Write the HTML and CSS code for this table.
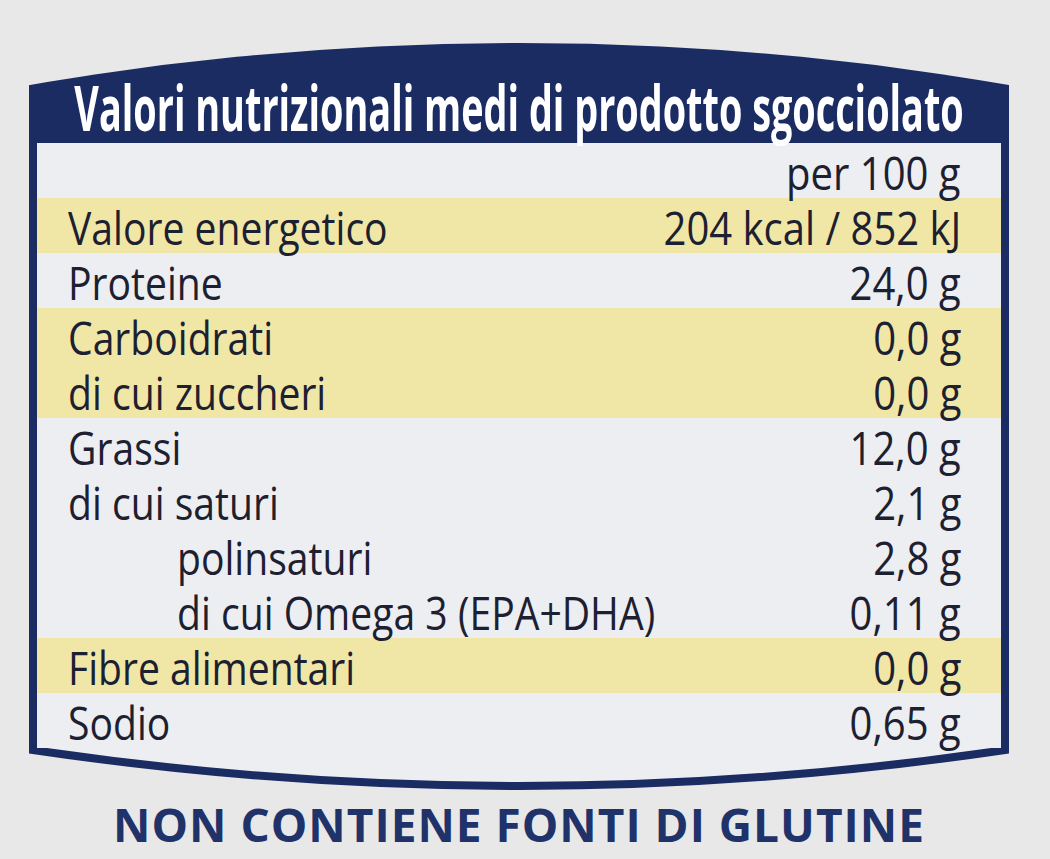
FILE: index.html
```html
<!DOCTYPE html>
<html lang="it">
<head>
<meta charset="utf-8">
<title>Valori nutrizionali</title>
<link rel="stylesheet" href="styles.css">
</head>
<body>
<main class="page">
  <section class="label">
    <header class="label-head">
      <h1 class="title"><span class="title-text">Valori nutrizionali medi di prodotto sgocciolato</span></h1>
    </header>
    <div class="label-body">
      <div class="row"><span class="lab"></span><span class="val"><span class="sq-r">per 100 g</span></span></div>
      <div class="row hl first"><span class="lab"><span class="sq-l">Valore energetico</span></span><span class="val"><span class="sq-r">204 kcal / 852 kJ</span></span></div>
      <div class="row"><span class="lab"><span class="sq-l">Proteine</span></span><span class="val"><span class="sq-r">24,0 g</span></span></div>
      <div class="row hl"><span class="lab"><span class="sq-l">Carboidrati</span></span><span class="val"><span class="sq-r">0,0 g</span></span></div>
      <div class="row hl"><span class="lab"><span class="sq-l">di cui zuccheri</span></span><span class="val"><span class="sq-r">0,0 g</span></span></div>
      <div class="row"><span class="lab"><span class="sq-l">Grassi</span></span><span class="val"><span class="sq-r">12,0 g</span></span></div>
      <div class="row"><span class="lab"><span class="sq-l">di cui saturi</span></span><span class="val"><span class="sq-r">2,1 g</span></span></div>
      <div class="row indent"><span class="lab"><span class="sq-l">polinsaturi</span></span><span class="val"><span class="sq-r">2,8 g</span></span></div>
      <div class="row indent"><span class="lab"><span class="sq-l">di cui Omega 3 (EPA+DHA)</span></span><span class="val"><span class="sq-r">0,11 g</span></span></div>
      <div class="row hl"><span class="lab"><span class="sq-l">Fibre alimentari</span></span><span class="val"><span class="sq-r">0,0 g</span></span></div>
      <div class="row"><span class="lab"><span class="sq-l">Sodio</span></span><span class="val"><span class="sq-r">0,65 g</span></span></div>
    </div>
    <svg class="label-foot" width="980" height="48" viewBox="0 0 980 48" aria-hidden="true">
      <path d="M4 0 L4 2 Q490 74 976 2 L976 0 Z" fill="#eceef1"/>
      <path d="M4 0 L4 2 Q490 74 976 2 L976 0" fill="none" stroke="#1b2c63" stroke-width="8" stroke-linejoin="miter"/>
    </svg>
  </section>
  <p class="gluten">NON CONTIENE FONTI DI GLUTINE</p>
</main>
</body>
</html>
```

FILE: styles.css
```css
* { box-sizing: border-box; }

html, body {
  margin: 0;
  padding: 0;
}

body {
  background: #e8e8e8;
  font-family: "Open Sans", "Liberation Sans", sans-serif;
  color: #1d2030;
  width: 1050px;
  height: 859px;
  overflow: hidden;
}

.page {
  padding-top: 43px;
  padding-left: 29px;
}

.label {
  width: 980px;
}

.label-head {
  height: 100px;
  background: #1b2c63;
  clip-path: circle(2879px at 50% 2879px);
  display: flex;
  align-items: flex-end;
  justify-content: center;
  padding-bottom: 1px;
}

.title {
  margin: 0;
  display: flex;
  justify-content: center;
  width: 100%;
  white-space: nowrap;
  font-weight: 700;
  font-size: 62px;
  line-height: 70px;
  color: #ffffff;
}

.title-text {
  display: inline-block;
  transform: scaleX(0.61);
  transform-origin: center center;
}

.label-body {
  background: #eceef1;
  border-left: 8px solid #1b2c63;
  border-right: 8px solid #1b2c63;
}

.row {
  display: flex;
  justify-content: space-between;
  height: 55px;
  padding: 7px 40px 0 31px;
  font-size: 46px;
  line-height: 44px;
  white-space: nowrap;
}

.row.hl {
  background: #f0e7a6;
}

.row.indent {
  padding-left: 140px;
}

.lab, .val {
  display: block;
}

.sq-l, .sq-r {
  display: inline-block;
  transform: scaleX(0.85);
}

.sq-r { transform: scaleX(0.87); }

.sq-l { transform-origin: left center; }
.sq-r { transform-origin: right center; }

.label-foot {
  display: block;
}

.gluten {
  margin: 6px 0 0;
  width: 980px;
  text-align: center;
  font-family: "Open Sans", "Liberation Sans", sans-serif;
  font-weight: 700;
  font-size: 46px;
  line-height: 44px;
  letter-spacing: 1px;
  color: #1f3269;
}
```
